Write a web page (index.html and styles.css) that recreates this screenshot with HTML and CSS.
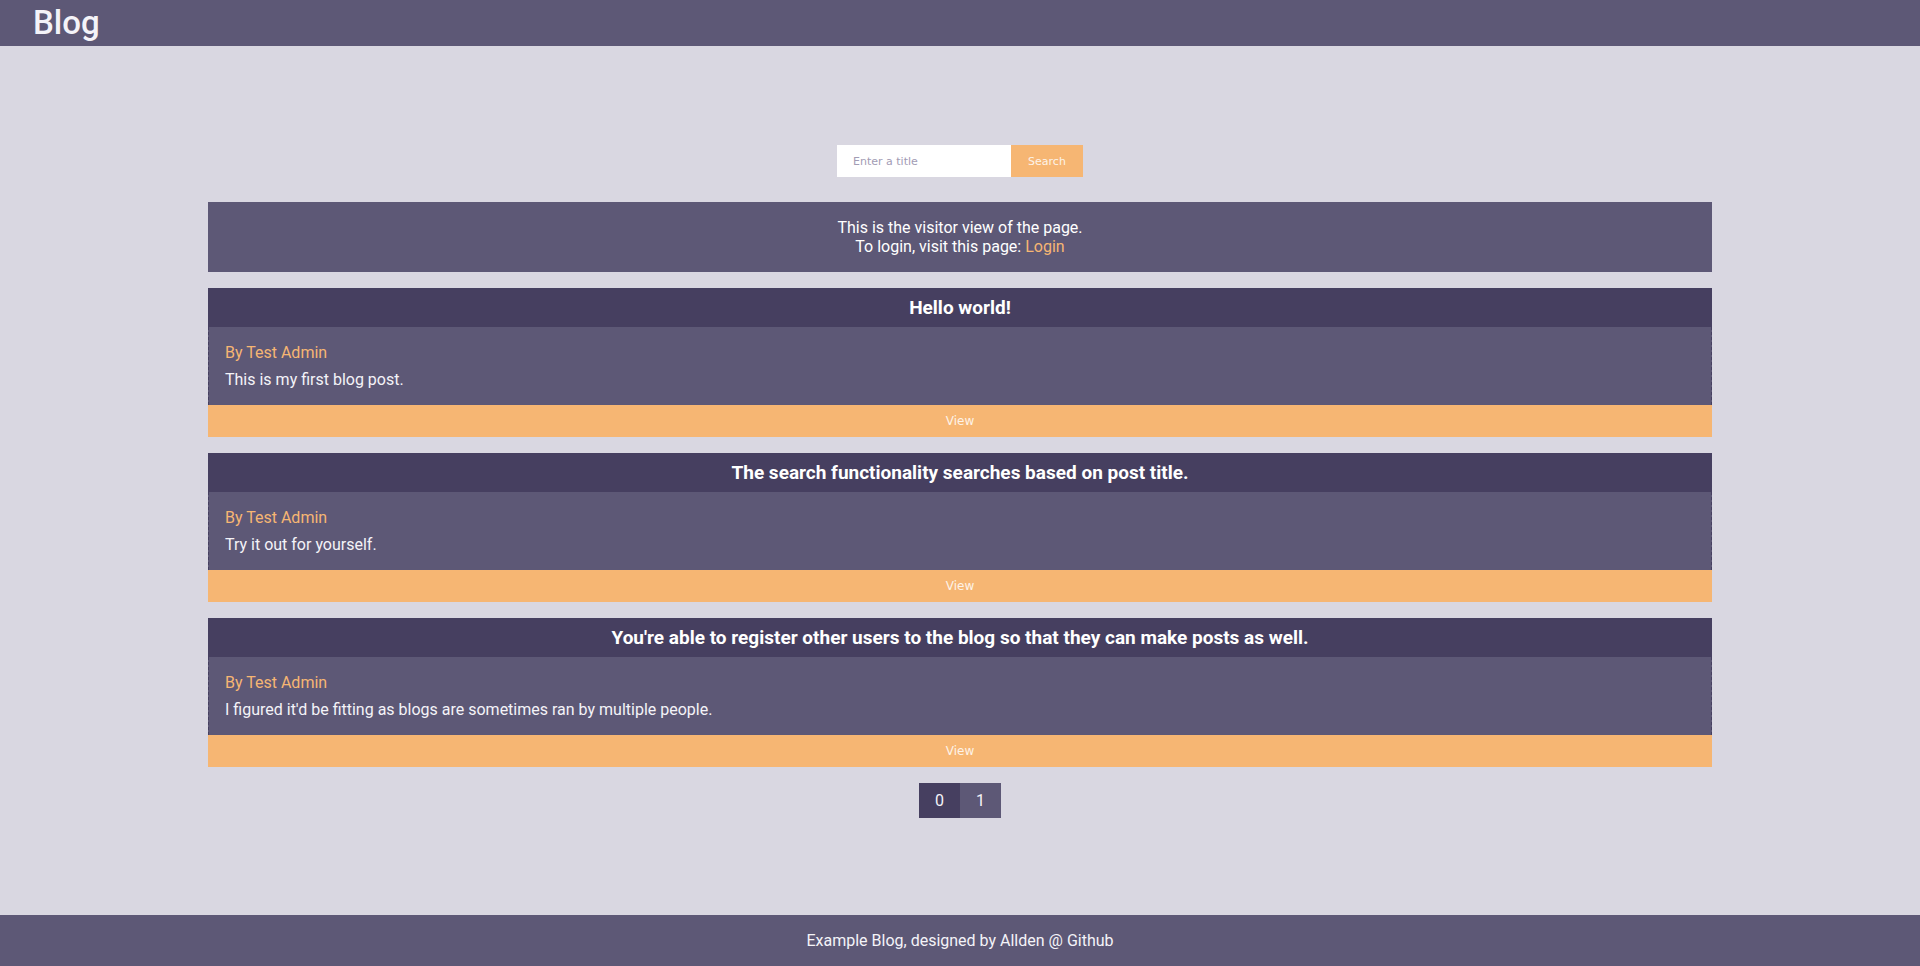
FILE: index.html
```html
<!DOCTYPE html>
<html lang="en">
<head>
<meta charset="utf-8">
<title>Blog</title>
<link rel="stylesheet" href="styles.css">
</head>
<body>
<header class="topbar">
  <div class="brand">Blog</div>
</header>
<main class="content">
  <form class="search">
    <input class="search-input" type="text" placeholder="Enter a title">
    <button class="search-btn" type="button">Search</button>
  </form>
  <section class="notice">
    <div>This is the visitor view of the page.</div>
    <div>To login, visit this page: <a class="link" href="#">Login</a></div>
  </section>
  <article class="post">
    <h2 class="post-title">Hello world!</h2>
    <div class="post-body">
      <div class="author">By Test Admin</div>
      <p class="excerpt">This is my first blog post.</p>
    </div>
    <a class="view" href="#">View</a>
  </article>
  <article class="post">
    <h2 class="post-title">The search functionality searches based on post title.</h2>
    <div class="post-body">
      <div class="author">By Test Admin</div>
      <p class="excerpt">Try it out for yourself.</p>
    </div>
    <a class="view" href="#">View</a>
  </article>
  <article class="post">
    <h2 class="post-title">You're able to register other users to the blog so that they can make posts as well.</h2>
    <div class="post-body">
      <div class="author">By Test Admin</div>
      <p class="excerpt">I figured it'd be fitting as blogs are sometimes ran by multiple people.</p>
    </div>
    <a class="view" href="#">View</a>
  </article>
  <nav class="pager">
    <a class="page active" href="#">0</a>
    <a class="page" href="#">1</a>
  </nav>
</main>
<footer class="footer">Example Blog, designed by Allden @ Github</footer>
</body>
</html>
```

FILE: styles.css
```css
* { box-sizing: border-box; }
html, body { margin: 0; padding: 0; }
body {
  min-height: 100vh;
  display: flex;
  flex-direction: column;
  background: #d9d7e1;
  font-family: Roboto, "Liberation Sans", sans-serif;
  color: #ffffff;
}
.topbar {
  height: 46px;
  background: #5d5876;
  padding-left: 33px;
  display: flex;
  align-items: center;
}
.brand {
  font-size: 33px;
  font-weight: 500;
  line-height: 46px;
  color: #f4f3f8;
}
.content {
  flex: 1;
  display: flex;
  flex-direction: column;
  align-items: center;
  padding-top: 99px;
}
.search {
  display: flex;
  height: 32px;
  margin: 0;
}
.search-input {
  width: 174px;
  height: 32px;
  border: none;
  outline: none;
  padding: 0 16px;
  font-family: "DejaVu Sans", sans-serif;
  font-size: 11px;
  color: #333;
  background: #ffffff;
}
.search-input::placeholder { color: #a29cb4; }
.search-btn {
  width: 72px;
  height: 32px;
  border: none;
  background: #f6b673;
  color: #fdf3e8;
  font-family: "DejaVu Sans", sans-serif;
  font-size: 11px;
  padding: 0;
}
.notice {
  width: 1504px;
  margin-top: 25px;
  background: #5d5876;
  padding: 16px;
  text-align: center;
  font-size: 16px;
  line-height: 19px;
}
.link { color: #f6b673; text-decoration: none; }
.post {
  width: 1504px;
  margin-top: 16px;
  display: flex;
  flex-direction: column;
}
.post-title {
  margin: 0;
  height: 39px;
  background: #463f60;
  font-size: 19px;
  font-weight: 700;
  line-height: 39px;
  text-align: center;
}
.post-body {
  background: #5d5876;
  padding: 16px;
  border-left: 1px dashed #463f60;
  border-right: 1px dashed #463f60;
  font-size: 16px;
  line-height: 19px;
}
.author { color: #f6b673; }
.excerpt { margin: 8px 0 0; color: #f4f3f8; }
.view {
  height: 32px;
  background: #f6b673;
  color: #fdf3e8;
  text-decoration: none;
  text-align: center;
  font-family: "DejaVu Sans", sans-serif;
  font-size: 12px;
  line-height: 33px;
}
.pager {
  display: flex;
  margin-top: 16px;
}
.page {
  width: 41px;
  height: 35px;
  line-height: 35px;
  text-align: center;
  background: #5d5876;
  color: #f4f3f8;
  font-size: 16px;
  text-decoration: none;
}
.page.active { background: #463f60; }
.footer {
  height: 51px;
  line-height: 51px;
  background: #5d5876;
  text-align: center;
  font-size: 16px;
  color: #f4f3f8;
}
```
